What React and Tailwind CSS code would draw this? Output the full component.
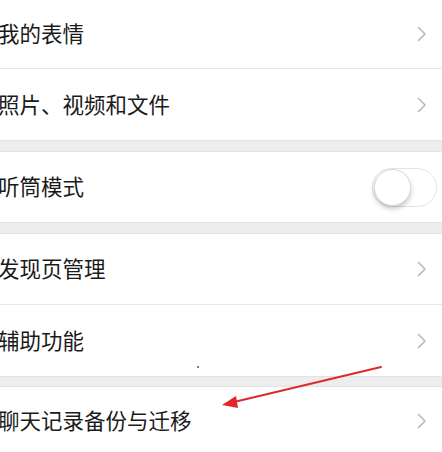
import React from "react";

const font = { fontFamily: '"Noto Sans CJK SC", "Noto Sans", sans-serif' };

function Chevron() {
  return (
    <svg width="10" height="16" viewBox="0 0 10 16" className="shrink-0">
      <path d="M1.5 1.5 L8 8 L1.5 14.5" fill="none" stroke="#b9b9b9" strokeWidth="1.6" strokeLinecap="round" strokeLinejoin="round" />
    </svg>
  );
}

function Row({ label, h, right }) {
  return (
    <div className={`flex items-center justify-between bg-white pl-0 pr-[15px] ${h}`}>
      <span className="text-[21.5px] leading-none text-[#1a1a1a] -ml-[2px] -mt-[2px]">{label}</span>
      {right}
    </div>
  );
}

function Toggle() {
  return (
    <div className="relative mr-[-10px] h-[39px] w-[65px] rounded-full border border-[#e3e3e3] bg-white">
      <div className="absolute left-[1px] top-[0px] h-[37px] w-[37px] rounded-full border border-[#d8d8d8] bg-white shadow-[0_3px_5px_rgba(0,0,0,0.22)]" />
    </div>
  );
}

function Band({ h }) {
  return <div className={`${h} bg-[#ededed] border-y border-[#e2e2e2]`} />;
}

export default function App() {
  return (
    <div className="relative h-[452px] w-[442px] overflow-hidden bg-white" style={font}>
      <div className="flex flex-col">
        <Row label="我的表情" h="h-[68px]" right={<Chevron />} />
        <div className="h-px bg-[#e6e6e6]" />
        <Row label="照片、视频和文件" h="h-[71px]" right={<Chevron />} />
        <Band h="h-[12px]" />
        <Row label="听筒模式" h="h-[70px]" right={<Toggle />} />
        <Band h="h-[12px]" />
        <Row label="发现页管理" h="h-[70px]" right={<Chevron />} />
        <div className="h-px bg-[#e6e6e6]" />
        <Row label="辅助功能" h="h-[71px]" right={<Chevron />} />
        <Band h="h-[11px]" />
        <Row label="聊天记录备份与迁移" h="h-[68px]" right={<Chevron />} />
      </div>
      <div className="absolute left-[197px] top-[366px] h-[2px] w-[2px] rounded-full bg-[#555]" />
      <svg className="absolute left-0 top-0" width="442" height="452">
        <line x1="381" y1="367" x2="234" y2="402" stroke="#e0282a" strokeWidth="2" strokeLinecap="round" />
        <polygon points="222,405 236,396 238,408" fill="#e0282a" />
      </svg>
    </div>
  );
}
